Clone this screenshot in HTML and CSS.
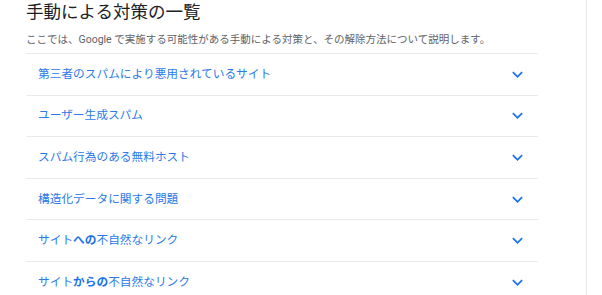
FILE: index.html
```html
<!DOCTYPE html>
<html lang="ja">
<head>
<meta charset="utf-8">
<link rel="stylesheet" href="styles.css">
</head>
<body>
<div class="page">
  <main class="main">
    <h2 class="title">手動による対策の一覧</h2>
    <p class="lead">ここでは、Google で実施する可能性がある手動による対策と、その解除方法について説明します。</p>
    <div class="list">
      <div class="row"><span class="label">第三者のスパムにより悪用されているサイト</span><svg class="chev" viewBox="0 0 24 24"><path d="M16.59 8.59L12 13.17 7.41 8.59 6 10l6 6 6-6z"/></svg></div>
      <div class="row"><span class="label">ユーザー生成スパム</span><svg class="chev" viewBox="0 0 24 24"><path d="M16.59 8.59L12 13.17 7.41 8.59 6 10l6 6 6-6z"/></svg></div>
      <div class="row"><span class="label">スパム行為のある無料ホスト</span><svg class="chev" viewBox="0 0 24 24"><path d="M16.59 8.59L12 13.17 7.41 8.59 6 10l6 6 6-6z"/></svg></div>
      <div class="row"><span class="label">構造化データに関する問題</span><svg class="chev" viewBox="0 0 24 24"><path d="M16.59 8.59L12 13.17 7.41 8.59 6 10l6 6 6-6z"/></svg></div>
      <div class="row"><span class="label">サイト<b>への</b>不自然なリンク</span><svg class="chev" viewBox="0 0 24 24"><path d="M16.59 8.59L12 13.17 7.41 8.59 6 10l6 6 6-6z"/></svg></div>
      <div class="row"><span class="label">サイト<b>からの</b>不自然なリンク</span><svg class="chev" viewBox="0 0 24 24"><path d="M16.59 8.59L12 13.17 7.41 8.59 6 10l6 6 6-6z"/></svg></div>
    </div>
  </main>
  <aside class="side"></aside>
</div>
</body>
</html>
```

FILE: styles.css
```css
html, body {
  margin: 0;
  padding: 0;
  background: #fff;
  overflow: hidden;
}
body {
  font-family: Roboto, "Noto Sans CJK JP", sans-serif;
  color: #202124;
}
.page {
  display: flex;
  height: 295px;
}
.main {
  width: 512px;
  margin-left: 26px;
  flex: none;
}
.side {
  margin-left: 48px;
  flex: 1;
  border-left: 1px solid #e8e8e8;
}
.title {
  margin: 0;
  font-size: 17.5px;
  line-height: 24px;
  font-weight: 400;
  color: #202124;
}
.lead {
  margin: 8px 0 5px;
  font-size: 10.5px;
  line-height: 16px;
  color: #5f6368;
}
.row {
  display: flex;
  align-items: center;
  justify-content: space-between;
  height: 40.6px;
  border-top: 1px solid #e8eaed;
  padding: 0 10px 0 12px;
}
.label {
  font-size: 11.7px;
  line-height: 14px;
  margin-top: -1px;
  color: #2a7ae9;
}
.label b {
  font-weight: 700;
  color: #1a73e8;
}
.chev {
  width: 21px;
  height: 21px;
  fill: #1a73e8;
}
```
